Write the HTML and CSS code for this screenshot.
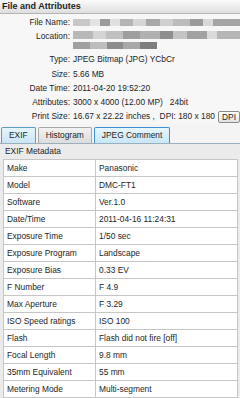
FILE: index.html
```html
<!DOCTYPE html>
<html lang="en">
<head>
    <meta charset="UTF-8">
    <meta name="viewport" content="width=device-width, initial-scale=1.0">
    <title>File and Attributes</title>
    <link rel="stylesheet" href="styles.css">
</head>
<body>
    <div class="header">File and Attributes</div>

    <div class="info">
        <div class="lbl">File Name:</div>
        <div class="val"><div class="blur blur-name"></div></div>

        <div class="lbl">Location:</div>
        <div class="val">
            <div class="blur blur-loc1"></div>
            <div class="blur blur-loc2"></div>
        </div>

        <div class="lbl">Type:</div>
        <div class="val">JPEG Bitmap (JPG) YCbCr</div>

        <div class="lbl">Size:</div>
        <div class="val">5.66 MB</div>

        <div class="lbl">Date Time:</div>
        <div class="val">2011-04-20 19:52:20</div>

        <div class="lbl">Attributes:</div>
        <div class="val">3000 x 4000 (12.00 MP)&nbsp;&nbsp;&nbsp;24bit</div>

        <div class="lbl">Print Size:</div>
        <div class="val print">
            <span>16.67 x 22.22 inches ,&nbsp;&nbsp;DPI: 180 x 180</span>
            <button class="dpi">DPI</button>
        </div>
    </div>

    <div class="tabs">
        <div class="tab active">EXIF</div>
        <div class="tab">Histogram</div>
        <div class="tab hover">JPEG Comment</div>
    </div>

    <div class="panel">
        <div class="panel-title">EXIF Metadata</div>
        <table class="exif">
            <tr><td>Make</td><td>Panasonic</td></tr>
            <tr><td>Model</td><td>DMC-FT1</td></tr>
            <tr><td>Software</td><td>Ver.1.0</td></tr>
            <tr><td>Date/Time</td><td>2011-04-16 11:24:31</td></tr>
            <tr><td>Exposure Time</td><td>1/50 sec</td></tr>
            <tr><td>Exposure Program</td><td>Landscape</td></tr>
            <tr><td>Exposure Bias</td><td>0.33 EV</td></tr>
            <tr><td>F Number</td><td>F 4.9</td></tr>
            <tr><td>Max Aperture</td><td>F 3.29</td></tr>
            <tr><td>ISO Speed ratings</td><td>ISO 100</td></tr>
            <tr><td>Flash</td><td>Flash did not fire [off]</td></tr>
            <tr><td>Focal Length</td><td>9.8 mm</td></tr>
            <tr><td>35mm Equivalent</td><td>55 mm</td></tr>
            <tr><td>Metering Mode</td><td>Multi-segment</td></tr>
        </table>
    </div>
</body>
</html>
```

FILE: styles.css
```css
body {
    font-family: 'Liberation Sans', Arial, sans-serif;
    font-size: 8.4px;
    color: #1e1e1e;
    margin: 0;
    padding: 0;
    background: #f4f4f4;
    width: 240px;
    overflow: hidden;
}

.header {
    height: 13px;
    line-height: 13px;
    padding-left: 2px;
    font-size: 9px;
    font-weight: bold;
    background: linear-gradient(#fbfbfb, #dedede);
    border-bottom: 1px solid #b4b4b4;
}

.info {
    display: grid;
    grid-template-columns: 70px 1fr;
    column-gap: 3px;
    padding-top: 1px;
    background: #f7f7f7;
}

.lbl {
    text-align: right;
    line-height: 14.3px;
    white-space: nowrap;
}

.val {
    line-height: 14.3px;
    white-space: nowrap;
    min-width: 0;
}

.blur {
    height: 7px;
    filter: blur(0.6px);
}

.blur-name {
    margin-top: 4px;
    background: linear-gradient(90deg,
        #c8c8c8 0 10%, #e4e4e4 10% 16%, #9c9c9c 16% 22%, #e0e0e0 22% 28%,
        #b4b4b4 28% 36%, #d6d6d6 36% 44%, #a8a8a8 44% 52%, #cfcfcf 52% 60%,
        #bcbcbc 60% 70%, #9a9a9a 70% 78%, #d8d8d8 78% 84%, #a4a4a4 84% 100%);
}

.blur-loc1 {
    margin-top: 2px;
    height: 8px;
    background: linear-gradient(90deg,
        #b8b8b8 0 12%, #d4d4d4 12% 20%, #c0c0c0 20% 30%, #9e9e9e 30% 40%,
        #b0b0b0 40% 52%, #8e8e8e 52% 60%, #c4c4c4 60% 68%, #a2a2a2 68% 80%,
        #dadada 80% 86%, #b6b6b6 86% 100%);
}

.blur-loc2 {
    margin-top: 3px;
    width: 84px;
    height: 7px;
    margin-bottom: 3px;
    background: linear-gradient(90deg,
        #a0a0a0 0 20%, #bdbdbd 20% 40%, #8c8c8c 40% 60%, #a8a8a8 60% 80%, #7e7e7e 80% 100%);
}

.print {
    display: flex;
    align-items: center;
}

.dpi {
    font-family: inherit;
    font-size: 8.4px;
    color: #1e1e1e;
    height: 12px;
    line-height: 10px;
    padding: 0 3px;
    margin: 0 0 0 auto;
    border: 1px solid #8a8a8a;
    border-radius: 2px;
    background: linear-gradient(#ffffff, #e2e2e2);
}

.tabs {
    display: flex;
    gap: 2px;
    padding: 3px 0 0 1px;
    background: #f4f4f4;
    border-bottom: 1px solid #9ab0bf;
}

.tab {
    height: 15px;
    line-height: 15px;
    padding: 0 7px;
    border: 1px solid #a8a8a8;
    border-bottom: none;
    background: linear-gradient(#f2f2f2, #dcdcdc);
    border-radius: 2px 2px 0 0;
}

.tab.active {
    background: linear-gradient(#e6f4fb, #cbe6f4);
    border-color: #5b9cbf;
}

.tab.hover {
    background: linear-gradient(#e9f6fd, #c8e6f6);
    border-color: #3c8fd0;
}

.panel {
    background: #ebebeb;
    padding: 0 2px 0 3px;
}

.panel-title {
    height: 15px;
    line-height: 15px;
    padding-left: 2px;
}

.exif {
    width: 100%;
    border-collapse: collapse;
    background: #ffffff;
}

.exif td {
    height: 16px;
    padding: 0 3px;
    border: 1px solid #c6c6c6;
    white-space: nowrap;
}

.exif td:first-child {
    width: 85px;
}
```
